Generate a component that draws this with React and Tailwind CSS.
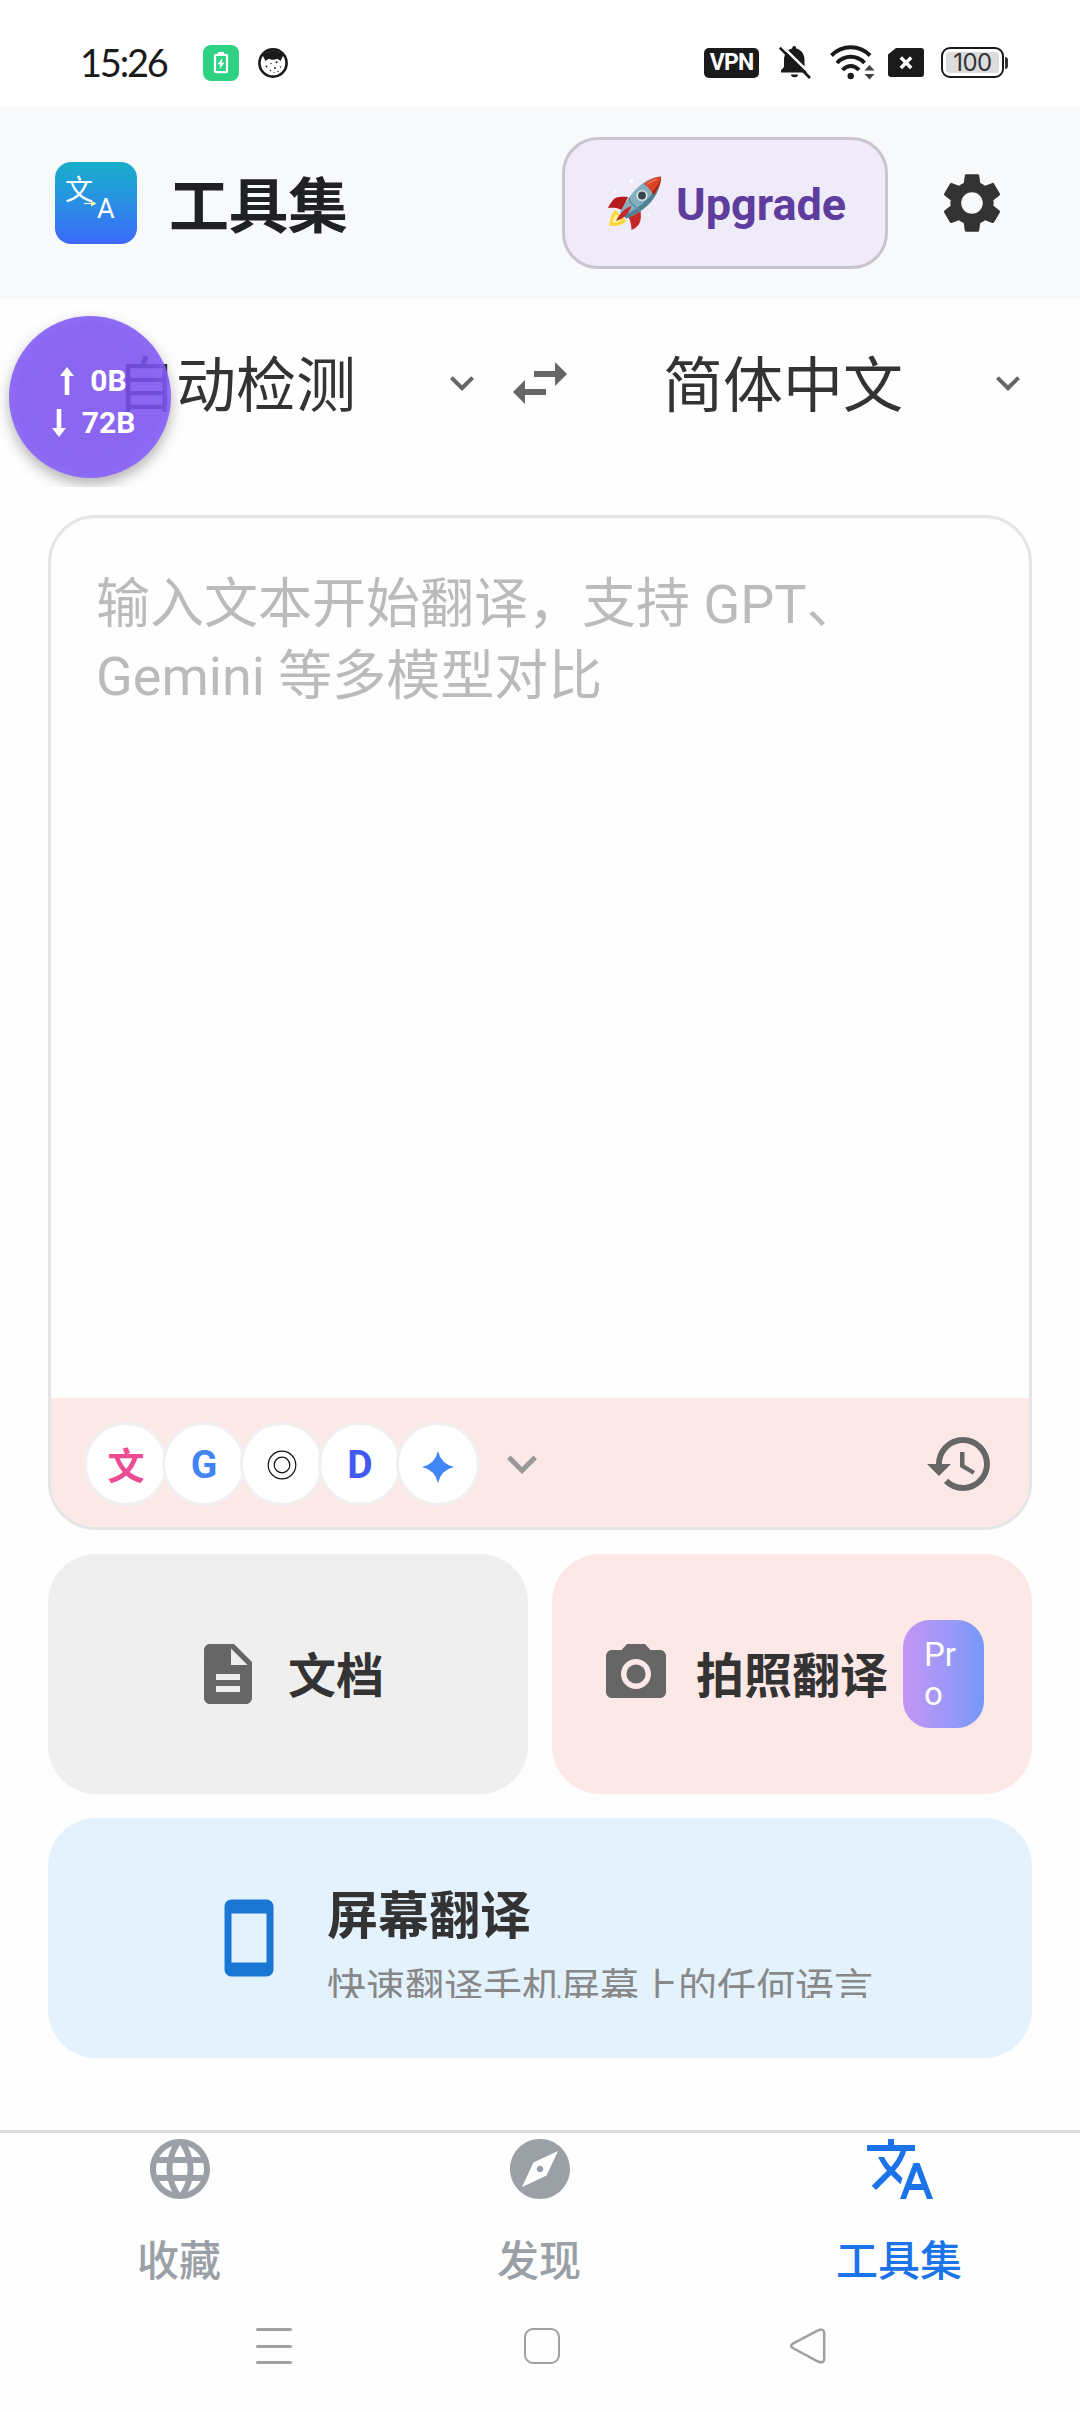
import {
  MdSettings,
  MdKeyboardArrowDown,
  MdSwapHoriz,
  MdHistory,
  MdDescription,
  MdCameraAlt,
  MdStayPrimaryPortrait,
  MdLanguage,
  MdExplore,
  MdTranslate,
} from "react-icons/md";

const tabs = [
  { label: "收藏", icon: MdLanguage, active: false },
  { label: "发现", icon: MdExplore, active: false },
  { label: "工具集", icon: MdTranslate, active: true },
];

const engines = [
  { id: "wen", node: <span className="pt-1.5 text-[#ec4c91] text-[37px]">文</span> },
  { id: "google", node: <span className="pt-[3px] text-[#4285f4] text-[39px]">G</span> },
  {
    id: "openai",
    node: (
      <svg viewBox="0 0 30 30" className="w-[30px] h-[30px] mt-px" fill="none" stroke="#111">
        <circle cx="15" cy="15" r="13.8" strokeWidth="1.2" />
        <circle cx="15" cy="15" r="7.8" strokeWidth="1.2" />
      </svg>
    ),
  },
  { id: "deepseek", node: <span className="pt-[3px] text-[#4259f2] text-[39px]">D</span> },
  {
    id: "gemini",
    node: (
      <svg viewBox="0 0 32 32" className="w-8 h-8 mt-[5px]" fill="#4285f4">
        <path d="M16 0 Q19 13 32 16 Q19 19 16 32 Q13 19 0 16 Q13 13 16 0Z" />
      </svg>
    ),
  },
];

function StatusBar() {
  return (
    <div className="h-[107px] bg-white flex items-center pt-[18px] pl-[80px] pr-[72px] text-[#1a1a1a]">
      <span className="w-[123px] pb-0.5 font-['Lato','Roboto',sans-serif] text-[38px] tracking-[-2.2px] leading-none">
        15:26
      </span>

      <div className="w-9 h-9 rounded-lg bg-[#2dd283] flex items-center justify-center">
        <svg viewBox="0 0 16 22" className="w-4 h-[22px]">
          <path d="M5 0h6v3H5z" fill="#fff" />
          <rect x="2" y="2.8" width="12" height="17.4" rx="1" fill="none" stroke="#fff" strokeWidth="2.2" />
          <path d="M9.5 6 4.5 12.3h2.8L6.5 17l5-6.3H8.7z" fill="#fff" />
        </svg>
      </div>

      <svg viewBox="0 0 30 30" className="w-[30px] h-[30px] ml-[19px]">
        <circle cx="15" cy="15" r="13.6" fill="#fff" stroke="#1a1a1a" strokeWidth="2.6" />
        <path d="M4.5 7Q15-2 25.5 7L22.5 13l-3-2.2Q15 12.5 10.5 10.8L7.5 13z" fill="#1a1a1a" />
        <g fill="#1a1a1a">
          <circle cx="8.5" cy="18.5" r=".9" />
          <circle cx="12.5" cy="22.5" r=".7" />
          <circle cx="17" cy="20" r=".9" />
          <circle cx="13" cy="15.5" r=".7" />
          <circle cx="18.5" cy="14.2" r="1" />
          <circle cx="22.5" cy="19" r=".7" />
          <circle cx="20" cy="23.5" r=".7" />
          <circle cx="16" cy="24.5" r=".6" />
        </g>
      </svg>

      <div className="ml-auto flex items-center">
        <div className="w-[55px] h-[30px] rounded-[5px] bg-[#1a1a1a] text-white font-bold text-[23px] tracking-[-0.8px] leading-none flex items-center justify-center">
          VPN
        </div>

        <svg viewBox="0 0 32 33" className="w-8 h-[33px] ml-[20px]">
          <path
            d="M2 26.5v-2.3L5 21V14c0-6 3.5-10.5 8.2-11.4V2a2 2 0 0 1 4 0v.6C22 3.7 25.5 8 25.5 14v7l3.5 3.2v2.3z"
            fill="#1a1a1a"
          />
          <path d="M12 28.5h7a3.5 2.8 0 0 1-7 0z" fill="#1a1a1a" />
          <path d="M2.5-.5 33.5 30" stroke="#fff" strokeWidth="2.6" />
          <path d="M.8 1.6 31 32" stroke="#1a1a1a" strokeWidth="2.6" />
        </svg>

        <svg viewBox="0 0 45 35" className="w-[45px] h-[35px] ml-[19px]" fill="none" stroke="#1a1a1a">
          <path d="M1.5 10.5C12 -.5 29.5 -.5 40 10.5" strokeWidth="4" />
          <path d="M7 18C14.5 9.8 27 9.8 34.5 18" strokeWidth="4" />
          <path d="M12.5 25C17.5 19.5 24 19.5 29 25" strokeWidth="4" />
          <circle cx="20.7" cy="31" r="3.2" fill="#1a1a1a" stroke="none" />
          <path d="M39.5 20l5 5.5h-10zM39.5 34.500l5-5.500h-10z" fill="#444" stroke="none" />
        </svg>

        <svg viewBox="0 0 36 30" className="w-9 h-[30px] ml-[13px]">
          <path d="M8 0h25a3 3 0 0 1 3 3v23a3 3 0 0 1-3 3H3a3 3 0 0 1-3-3V6.5z" fill="#1a1a1a" />
          <path d="M12.8 9.500l10.400 10.500M23.200 9.500L12.800 20" stroke="#fff" strokeWidth="3.4" />
        </svg>

        <div className="ml-[17px] w-[63px] h-[31px] border-2 border-[#1a1a1a] rounded-[9px] p-[3px]">
          <div className="w-full h-full rounded-[4px] bg-[#dcdcdc] flex items-center justify-center font-['Inter',sans-serif] text-[24px] tracking-[-0.5px] leading-none text-[#333]">
            100
          </div>
        </div>
        <div className="ml-px w-[3px] h-3 rounded-r bg-[#333]" />
      </div>
    </div>
  );
}

function Logo() {
  return (
    <div className="w-[82px] h-[82px] rounded-2xl bg-linear-to-b from-[#18aecb] to-[#3b68fb]">
      <svg viewBox="0 0 82 82" className="w-full h-full">
        <text x="10" y="38" fontSize="28" fill="#fff" fontFamily="Noto Sans CJK SC, sans-serif">
          文
        </text>
        <text x="42" y="56" fontSize="27" fill="#fff" fontFamily="Roboto, sans-serif">
          A
        </text>
        <path d="M29 41.5h7" stroke="#fff" strokeWidth="1.2" />
        <path d="M36 38.5l5.500 3-5.500 3z" fill="#fffbc0" />
      </svg>
    </div>
  );
}

function Rocket() {
  return (
    <svg viewBox="0 0 54 54" className="w-[54px] h-[54px]">
      <path d="M7 34C2 40 2 45 1.5 50c6 .5 12-.5 17-5z" fill="#fdd835" />
      <path d="M8 38c-3 4-3 6-3.5 9 4 0 7-1 9.5-3z" fill="#fff59d" />
      <path d="M20 21C13 20.5 8 20 5 24c-2 3-4 5-5 8 5-.5 9-.5 14 2z" fill="#b71c1c" />
      <path d="M32.5 35c1 7 0 11-2 14-2 2-4 4-7 5 0-5-1-9-3.5-14z" fill="#c62828" />
      <path d="M53 .5C38 1.5 24 13 12 36.5l6.5 6C39 34 52 20 53 .5z" fill="#82aec0" />
      <path d="M53 .5C50 14 36 30 15.5 40l3 2.5C39 34 52 20 53 .5z" fill="#4f8195" />
      <path d="M21 22c1 5 4 8 11.5 12.5" fill="none" stroke="#648fa0" strokeWidth="1.5" />
      <path d="M53 .5c-6 .3-12 3-17.5 7.5 4 2 7.5 6 10 11C50.5 13 53.5 7 53 .5z" fill="#db4422" />
      <path d="M53 .5C53 6 50 13 45.500 19l-1.500-3c4-4 7.500-9 9-15.500z" fill="#a52714" />
      <path d="M39.500 8c3-2.500 6-4 9-4.500" stroke="#ef7564" strokeWidth="1.6" strokeLinecap="round" fill="none" />
      <circle cx="34" cy="19.5" r="5.6" fill="#e0e0e0" />
      <circle cx="34" cy="19.5" r="3.9" fill="#37474f" />
      <path d="M23.500 30C17 32 11 38 8 45c7-2 13-7 15.500-15z" fill="#c62828" />
      <g fill="#fff">
        <circle cx="23.5" cy="5" r="2" />
        <circle cx="7.5" cy="15.5" r="1.3" />
        <circle cx="47.5" cy="28" r="1.1" />
        <circle cx="41" cy="39.5" r="1.1" />
      </g>
    </svg>
  );
}

function Header() {
  return (
    <header className="h-48 bg-[#f8f9fb] flex items-center px-[55px]">
      <Logo />
      <h1 className="ml-8 pt-[9px] text-[60px] leading-[72px] font-bold text-[#202124] tracking-[-0.5px]">工具集</h1>
      <button className="ml-auto w-[326px] h-[132px] rounded-[36px] border-3 border-[#cac4d0] bg-[#f0ebf8] flex items-center pl-[43px]">
        <Rocket />
        <span className="ml-[14px] pt-0.5 text-[45px] leading-none font-bold text-[#5e3d9e]">Upgrade</span>
      </button>
      <MdSettings className="ml-12 mr-[17px] w-[72px] h-[72px] text-[#333]" />
    </header>
  );
}

function LanguageBar() {
  return (
    <div className="h-[216px] px-9 pb-12 flex items-center text-[60px] leading-[72px] text-[#333]">
      <div className="w-[468px] flex items-center">
        <span className="flex-1 pt-2 pr-0.5 text-center">自动检测</span>
        <MdKeyboardArrowDown className="w-12 h-12 mr-[18px] text-[#666]" />
      </div>
      <MdSwapHoriz className="w-[72px] h-[72px] text-[#666]" />
      <div className="w-[468px] pl-1.5 flex items-center">
        <span className="flex-1 pt-2 text-center">简体中文</span>
        <MdKeyboardArrowDown className="w-12 h-12 mr-3 text-[#666]" />
      </div>
    </div>
  );
}

function SpeedBubble() {
  return (
    <div className="absolute left-0 top-[300px] w-[184px] h-[187px] overflow-hidden">
      <div className="ml-[9px] mt-4 w-[162px] h-[162px] rounded-full bg-[#7a50ef]/87 shadow-[0_6px_14px_rgba(0,0,0,0.3),inset_0_0_18px_rgba(150,115,255,0.7)] flex flex-col items-center justify-center pl-[7px] pt-[9px] text-white font-bold text-[30px] leading-[42px]">
        <div className="flex items-center gap-4">
          <svg viewBox="0 0 14 28" className="w-3.5 h-7" fill="#fff">
            <path d="M7 0l7 9H9.300v19H4.700V9H0z" />
          </svg>
          0B
        </div>
        <div className="flex items-center gap-4">
          <svg viewBox="0 0 14 28" className="w-3.5 h-7" fill="#fff">
            <path d="M7 28l7-9H9.300V0H4.700v19H0z" />
          </svg>
          72B
        </div>
      </div>
    </div>
  );
}

function Editor() {
  return (
    <div className="h-[1015px] rounded-[48px] border-3 border-[#e5e5e5] overflow-hidden flex flex-col">
      <p className="flex-1 px-[45px] pt-[51px] text-[54px] leading-[72px] text-[#bbb]">
        输入文本开始翻译，支持 GPT、
        <br />
        Gemini 等多模型对比
      </p>
      <div className="h-[129px] bg-[#fce8e6] flex items-center pl-[33px] pr-[33px] pt-[3px]">
        <div className="flex -space-x-1.5">
          {engines.map((engine) => (
            <div
              key={engine.id}
              className="w-[84px] h-[84px] rounded-full bg-white border-3 border-[#f0f0f0] flex items-center justify-center font-bold leading-none"
            >
              {engine.node}
            </div>
          ))}
        </div>
        <MdKeyboardArrowDown className="ml-3 w-[60px] h-[60px] text-[#999]" />
        <MdHistory className="ml-auto w-[72px] h-[72px] text-[#666]" />
      </div>
    </div>
  );
}

function ToolCards() {
  return (
    <div className="mt-6 grid grid-cols-2 gap-6 text-[48px] font-bold text-[#333]">
      <div className="h-[240px] rounded-[48px] bg-[#efefef] flex items-center pl-36">
        <MdDescription className="w-[72px] h-[72px] text-[#666]" />
        <span className="ml-6 pt-1.5 leading-[60px]">文档</span>
      </div>
      <div className="h-[240px] rounded-[48px] bg-[#fce8e6] flex items-center pl-12">
        <MdCameraAlt className="w-[72px] h-[72px] text-[#666]" />
        <span className="ml-6 pt-1.5 leading-[60px] whitespace-nowrap">拍照翻译</span>
        <span className="ml-[15px] w-[81px] h-[108px] rounded-[27px] pl-[21px] pt-[15px] bg-linear-to-r from-[#c495f5] to-[#7499f9] text-white text-[33px] leading-[39px] font-normal">
          Pr
          <br />o
        </span>
      </div>
      <div className="col-span-2 h-[240px] rounded-[48px] bg-[#e3f2fd] flex items-center pl-[159px]">
        <MdStayPrimaryPortrait className="w-[84px] h-[84px] text-[#1976d2]" />
        <div className="ml-9 h-[120px] pt-[3px] overflow-hidden">
          <div className="text-[51px] leading-[72px]">屏幕翻译</div>
          <div className="mt-[11px] text-[39px] leading-[48px] font-normal text-[#888]">
            快速翻译手机屏幕上的任何语言
          </div>
        </div>
      </div>
    </div>
  );
}

function TabBar() {
  return (
    <nav className="mt-[72px] h-[162px] border-t-3 border-[#dadce0] grid grid-cols-3">
      {tabs.map(({ label, icon: Icon, active }) => (
        <div
          key={label}
          className={`flex flex-col items-center ${active ? "text-[#1a73e8]" : "text-[#9aa0a6]"}`}
        >
          <Icon className="w-[72px] h-[72px]" />
          <span className="mt-[29px] pr-0.5 text-[42px] leading-[56px] font-medium">{label}</span>
        </div>
      ))}
    </nav>
  );
}

function SystemNav() {
  return (
    <div className="h-[108px] flex items-center pl-64">
      <div className="w-9 h-9 flex flex-col justify-between">
        <div className="h-[3px] rounded bg-[#a0a0a0]" />
        <div className="h-[3px] rounded bg-[#a0a0a0]" />
        <div className="h-[3px] rounded bg-[#a0a0a0]" />
      </div>
      <div className="ml-[232px] w-9 h-9 rounded-[9px] border-[2.5px] border-[#a0a0a0]" />
      <svg viewBox="0 0 36 36" className="ml-[230px] w-9 h-9" fill="none" stroke="#a0a0a0" strokeWidth="2.5">
        <path d="M2.800 15.700 28 2.300Q34 0 34.200 5v26Q34 36 28 33.500L2.800 20Q-.6 17.800 2.800 15.700Z" />
      </svg>
    </div>
  );
}

export default function App() {
  return (
    <div className="relative w-[1080px] h-[2412px] overflow-hidden bg-[#fefefe] font-['Roboto','Noto_Sans_CJK_SC',sans-serif]">
      <StatusBar />
      <Header />
      <LanguageBar />
      <main className="px-12">
        <Editor />
        <ToolCards />
      </main>
      <TabBar />
      <SystemNav />
      <SpeedBubble />
    </div>
  );
}
